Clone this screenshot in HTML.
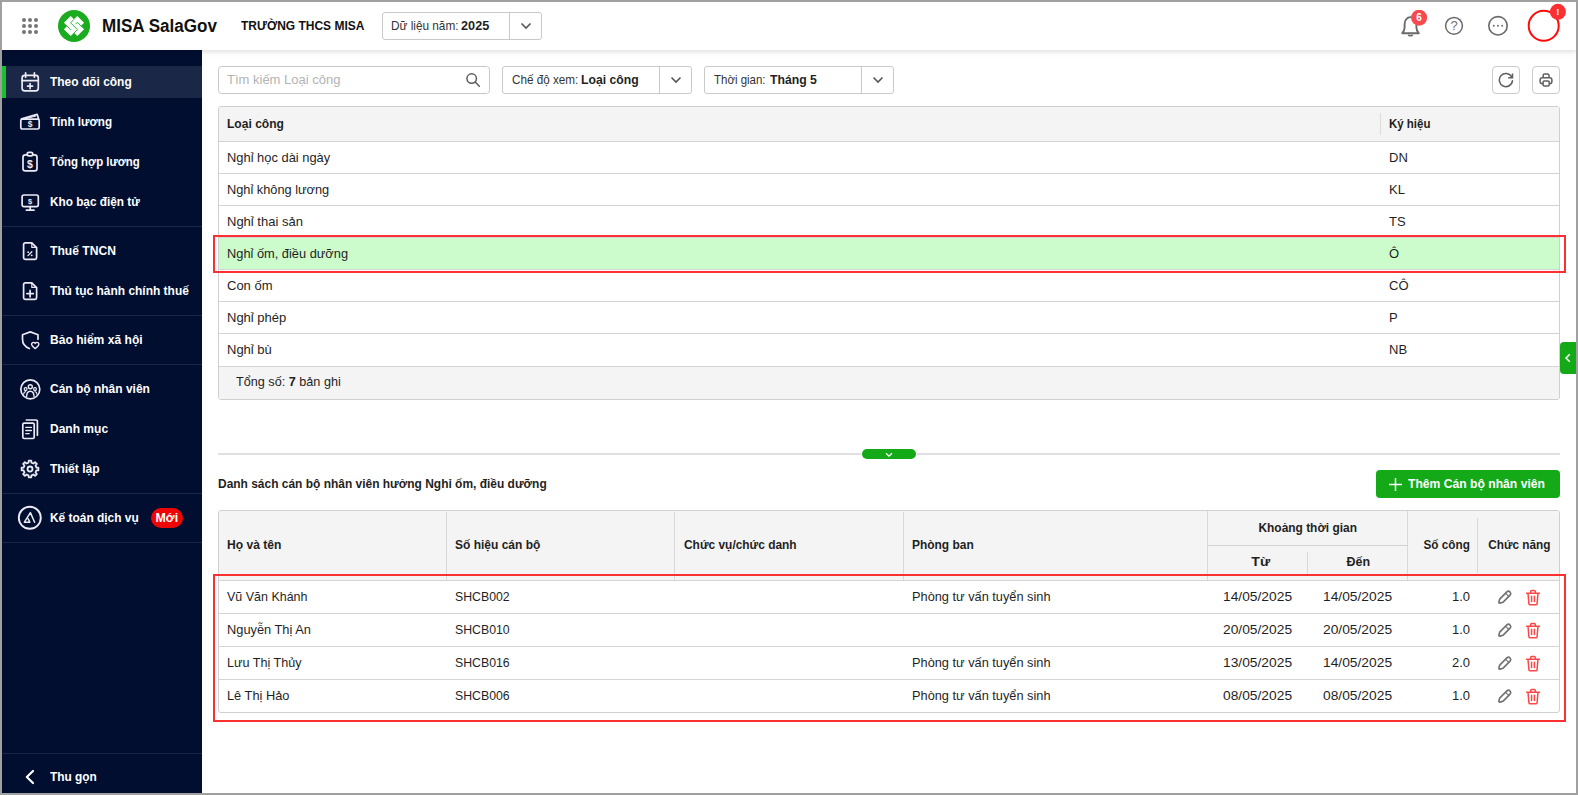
<!DOCTYPE html>
<html lang="vi">
<head>
<meta charset="utf-8">
<title>MISA SalaGov</title>
<style>
*{box-sizing:border-box;margin:0;padding:0}
html,body{width:1578px;height:795px;overflow:hidden;background:#a0a0a0;font-family:"Liberation Sans",sans-serif;font-size:13px;color:#1f1f1f}
#app{position:absolute;left:2px;top:2px;width:1574px;height:791px;background:#fff;overflow:hidden}
.abs{position:absolute}
/* header */
#hdr{position:absolute;left:0;top:0;width:1574px;height:48px;background:#fff;box-shadow:0 2px 5px rgba(0,0,0,.13);z-index:5}
#brand{position:absolute;left:100px;top:12px;font-size:18px;font-weight:700;color:#111;line-height:24px;white-space:nowrap}
#org{position:absolute;left:239px;top:14px;font-size:13px;font-weight:700;color:#111;line-height:20px;white-space:nowrap}
.combo{position:absolute;height:28px;border:1px solid #c9c9c9;border-radius:3px;background:#fff;line-height:26px;font-size:13px;white-space:nowrap;color:#333}
.combo b{color:#1f1f1f}
.combo .lbl{position:absolute;left:8px;top:0}
.combo .arr{position:absolute;right:0;top:0;width:32px;height:26px;border-left:1px solid #c9c9c9}
.combo .arr svg{position:absolute;left:10px;top:9px}
/* sidebar */
#side{position:absolute;left:0;top:48px;width:200px;height:743px;background:#010e30}
.mi{position:absolute;left:0;width:200px;height:32px;color:#fff;font-weight:700;font-size:13px;line-height:32px;white-space:nowrap}
.mi>span{position:absolute;left:48px;top:0}
.mi.act{background:#1a2746}
.mi.act:before{content:"";position:absolute;left:0;top:0;width:4px;height:32px;background:#19c12f}
.mi svg{position:absolute}
.new{position:absolute;left:149px;top:6px;width:32px;height:20px;border-radius:10px;background:#ee0505;color:#fff;font-style:normal;font-weight:700;font-size:13px;line-height:20px;text-align:center}
.sep{position:absolute;left:0;width:200px;height:1px;background:#1a2646}
/* content */
.grid{position:absolute;left:216px;width:1342px;border:1px solid #d0d0d0;border-radius:3px;overflow:hidden;background:#fff}
.row{position:absolute;left:0;width:1340px;border-top:1px solid #d4d4d4;white-space:nowrap}
.cell{position:absolute;top:0;white-space:nowrap}
.hb{font-weight:700}

.sbox{border:1px solid #c6c6c6;border-radius:3.5px;background:#fff}
.sbox .ph{position:absolute;left:8px;top:0;line-height:26px;color:#b3b3b3;white-space:nowrap}
.ibtn{width:28px;height:28px;border:1px solid #cbcbcb;border-radius:4px;background:#fff}
.ghead{position:absolute;left:0;width:1340px;background:#f4f4f4}
.row.sel{background:#ccfccc}
.gfoot{background:#f4f4f4}
.gfoot em{font-style:normal;font-weight:700}
.vs{position:absolute;width:1px;background:#d8d8d8}
.hs{position:absolute;height:1px;background:#d2d2d2}
.ctr{text-align:center}
.redbox{border:2px solid #fb3030;pointer-events:none}
#addbtn{background:#13a917;border-radius:4px;color:#fff;font-weight:700;line-height:28px;white-space:nowrap}
#addbtn>span{position:absolute;left:32px;top:0}
.t{display:inline-block;transform-origin:0 50%;white-space:nowrap}
.ctr .t,.new .t{transform-origin:50% 50%}
.cb{position:absolute;top:0}
</style>
</head>
<body>
<div id="app">
<div id="hdr">
  <svg class="abs" style="left:18px;top:14px" width="20" height="20" viewBox="0 0 20 20" fill="#757575"><circle cx="4" cy="4" r="2"/><circle cx="10" cy="4" r="2"/><circle cx="16" cy="4" r="2"/><circle cx="4" cy="10" r="2"/><circle cx="10" cy="10" r="2"/><circle cx="16" cy="10" r="2"/><circle cx="4" cy="16" r="2"/><circle cx="10" cy="16" r="2"/><circle cx="16" cy="16" r="2"/></svg>
  <svg class="abs" style="left:56px;top:8px" width="32" height="32" viewBox="0 0 32 32"><circle cx="16" cy="16" r="16" fill="#1aab1f"/><g transform="rotate(45 16 16)" fill="#fff"><path d="M11.2 6.5h9.6v4.7h4.7v9.6h-4.7v4.7h-9.6v-4.7H6.5v-9.6h4.7z"/></g><g stroke="#1aab1f" stroke-width=".9" fill="none"><path d="M16 9.4L12.6 12.8 19.4 19.6 16 22.9"/><path d="M8.9 16l3.7 3.7.8-.8"/><path d="M23.1 16l-3.7-3.7-1.9 1.9"/></g></svg>
  <div id="brand"><span class="t" style="transform:scaleX(0.947)">MISA SalaGov</span></div>
  <div id="org"><span class="t" style="transform:scaleX(0.922)">TRƯỜNG THCS MISA</span></div>
  <div class="combo" style="left:380px;top:10px;width:160px"><span class="lbl" style="left:7.5px"><span class="t" style="transform:scaleX(0.907)">Dữ liệu năm:</span></span><b class="t cb" style="left:78.1px;transform:scaleX(0.977)">2025</b><span class="arr"><svg width="12" height="8" viewBox="0 0 12 8" fill="none" stroke="#555" stroke-width="1.6"><path d="M1.5 1.5l4.5 4.5 4.5-4.5"/></svg></span></div>

  <svg class="abs" style="left:1394px;top:8px" width="40" height="32" viewBox="0 0 40 32"><g fill="none" stroke="#6a6a6a" stroke-width="1.9" stroke-linecap="round" stroke-linejoin="round"><path d="M6.2 23.2h16.6c-1.6-1.5-2.4-3.2-2.4-5.6v-3.3c0-3.9-2.4-7.2-5.9-7.2s-5.9 3.300-5.900 7.200v3.300c0 2.400-.8 4.100-2.400 5.600z"/><path d="M12.600 25.200q1.900.900 3.800 0" stroke-width="1.500"/></g><circle cx="23.100" cy="7.700" r="8" fill="#f74a4f"/><text x="23.100" y="11.300" font-size="10" font-weight="700" fill="#fff" text-anchor="middle" font-family="Liberation Sans, sans-serif">6</text></svg>
  <svg class="abs" style="left:1441px;top:13px" width="22" height="22" viewBox="0 0 22 22"><circle cx="11" cy="10.800" r="8.400" fill="none" stroke="#696969" stroke-width="1.500"/><text x="11" y="15.300" font-size="13" fill="#6f6f6f" text-anchor="middle" font-family="Liberation Sans, sans-serif">?</text></svg>
  <svg class="abs" style="left:1484px;top:12px" width="24" height="24" viewBox="0 0 24 24"><circle cx="12" cy="11.800" r="9.200" fill="none" stroke="#696969" stroke-width="1.600"/><circle cx="7.800" cy="11.800" r="1" fill="#6f6f6f"/><circle cx="12" cy="11.800" r="1" fill="#6f6f6f"/><circle cx="16.200" cy="11.800" r="1" fill="#6f6f6f"/></svg>
  <svg class="abs" style="left:1524px;top:0px" width="46" height="46" viewBox="0 0 46 46"><circle cx="17.700" cy="23.800" r="15" fill="#fff" stroke="#ff0a0a" stroke-width="2"/><circle cx="31.900" cy="9.800" r="8" fill="#fc2f33"/><text x="31.900" y="13.200" font-size="9.500" font-weight="700" fill="#fff" text-anchor="middle" font-family="Liberation Sans, sans-serif">!</text></svg>
</div>
<div id="side">
  <div class="mi act" style="top:16px"><svg style="left:16px;top:4px" width="24" height="24" viewBox="0 0 24 24"><g fill="none" stroke="#eceaf4" stroke-width="1.700" stroke-linecap="round" stroke-linejoin="round"><rect x="4.1" y="5.4" width="16.2" height="15.4" rx="2.6"/><path d="M7.6 2.8v4.4M16.4 2.8v4.4M4.1 10.6h16.2M12.1 13.6v5M9.6 16.1h5"/></g></svg><span><span class="t" style="transform:scaleX(0.920)">Theo dõi công</span></span></div>
  <div class="mi" style="top:56px"><svg style="left:16px;top:4px" width="24" height="24" viewBox="0 0 24 24"><g fill="none" stroke="#eceaf4" stroke-width="1.700" stroke-linecap="round" stroke-linejoin="round"><rect x="2.8" y="9.2" width="18.4" height="9.8" rx="1.6"/><path d="M3.6 8.9L19.2 4.4l1.4 4.5"/><path d="M7 8.800l10.800-2.600" stroke-width="1"/></g><text x="12" y="17.3" font-size="8.5" font-family="Liberation Sans, sans-serif" font-weight="700" fill="#eceaf4" stroke="none" text-anchor="middle">$</text></svg><span><span class="t" style="transform:scaleX(0.896)">Tính lương</span></span></div>
  <div class="mi" style="top:96px"><svg style="left:16px;top:4px" width="24" height="24" viewBox="0 0 24 24"><g fill="none" stroke="#eceaf4" stroke-width="1.700" stroke-linecap="round" stroke-linejoin="round"><rect x="5" y="4.8" width="14" height="16" rx="2.4"/><rect x="9.2" y="2.4" width="5.6" height="3.4" rx="1.7" fill="#010e30"/></g><text x="12" y="17.6" font-size="10.5" font-family="Liberation Sans, sans-serif" font-weight="700" fill="#eceaf4" stroke="none" text-anchor="middle">$</text></svg><span><span class="t" style="transform:scaleX(0.878)">Tổng hợp lương</span></span></div>
  <div class="mi" style="top:136px"><svg style="left:16px;top:4px" width="24" height="24" viewBox="0 0 24 24"><g fill="none" stroke="#eceaf4" stroke-width="1.700" stroke-linecap="round" stroke-linejoin="round"><rect x="4.1" y="5" width="16.2" height="11.6" rx="1.8"/><path d="M12.2 16.6v3.4M8.4 20.2h7.6"/></g><text x="12.2" y="13.7" font-size="7.5" font-family="Liberation Sans, sans-serif" font-weight="700" fill="#eceaf4" stroke="none" text-anchor="middle">$</text></svg><span><span class="t" style="transform:scaleX(0.906)">Kho bạc điện tử</span></span></div>
  <div class="mi" style="top:185px"><svg style="left:16px;top:4px" width="24" height="24" viewBox="0 0 24 24"><g fill="none" stroke="#eceaf4" stroke-width="1.700" stroke-linecap="round" stroke-linejoin="round"><path d="M7.2 3.8h6.6l4.8 4.8v10.200a1.6 1.6 0 0 1-1.6 1.6H7.2a1.6 1.6 0 0 1-1.6-1.6V5.4a1.6 1.6 0 0 1 1.6-1.6z"/><path d="M13.8 4.2v4.200h4.4" stroke-width="1.2"/><path d="M10 16.600l3.800-3.800" stroke-width="1.300"/></g><circle cx="10.200" cy="13.200" r=".9" fill="#eceaf4"/><circle cx="13.700" cy="16.300" r=".9" fill="#eceaf4"/></svg><span><span class="t" style="transform:scaleX(0.932)">Thuế TNCN</span></span></div>
  <div class="mi" style="top:225px"><svg style="left:16px;top:4px" width="24" height="24" viewBox="0 0 24 24"><g fill="none" stroke="#eceaf4" stroke-width="1.700" stroke-linecap="round" stroke-linejoin="round"><path d="M7.2 3.8h6.6l4.8 4.8v10.200a1.6 1.6 0 0 1-1.6 1.6H7.2a1.6 1.6 0 0 1-1.6-1.6V5.4a1.6 1.6 0 0 1 1.6-1.6z"/><path d="M13.8 4.2v4.200h4.4" stroke-width="1.2"/><path d="M12.100 11.400v6.400M8.900 14.600h6.400"/></g></svg><span><span class="t" style="transform:scaleX(0.920)">Thủ tục hành chính thuế</span></span></div>
  <div class="mi" style="top:274px"><svg style="left:16px;top:4px" width="24" height="24" viewBox="0 0 24 24"><g fill="none" stroke="#eceaf4" stroke-width="1.700" stroke-linecap="round" stroke-linejoin="round"><path d="M20 11.200V6.700L12.300 3.900 4.500 6.700v4.600c0 4.600 2.800 7.700 6.900 9.200"/><path d="M17.200 20.600c-2-1.500-3.600-2.700-3.600-4.300 0-1.200.9-1.900 1.800-1.900.8 0 1.400.400 1.800 1.100.4-.7 1-1.100 1.800-1.100.9 0 1.800.7 1.800 1.900 0 1.600-1.600 2.800-3.600 4.300z" stroke-width="1.400"/></g></svg><span><span class="t" style="transform:scaleX(0.929)">Bảo hiểm xã hội</span></span></div>
  <div class="mi" style="top:323px"><svg style="left:16px;top:4px" width="24" height="24" viewBox="0 0 24 24"><g fill="none" stroke="#eceaf4" stroke-width="1.700" stroke-linecap="round" stroke-linejoin="round"><circle cx="12.300" cy="12.300" r="9.500"/><circle cx="12.300" cy="9.800" r="2" stroke-width="1.400"/><path d="M8.600 19.600c0-3.300 1.500-5.400 3.700-5.400s3.700 2.100 3.700 5.400" stroke-width="1.400"/><rect x="6.300" y="10.600" width="2.600" height="2.800" rx="1" stroke-width="1.200"/><rect x="15.700" y="10.600" width="2.600" height="2.800" rx="1" stroke-width="1.200"/><path d="M5.600 17.200c.2-1.600.9-2.500 2-2.600M19 17.200c-.2-1.600-.9-2.500-2-2.600" stroke-width="1.200"/></g></svg><span><span class="t" style="transform:scaleX(0.922)">Cán bộ nhân viên</span></span></div>
  <div class="mi" style="top:363px"><svg style="left:16px;top:4px" width="24" height="24" viewBox="0 0 24 24"><g fill="none" stroke="#eceaf4" stroke-width="1.700" stroke-linecap="round" stroke-linejoin="round"><rect x="4.800" y="6.200" width="11.400" height="15.300" rx="1.400"/><path d="M8.400 3h9.600a1.400 1.400 0 0 1 1.400 1.400v13.800"/><path d="M7.800 10.400h5.600M7.800 13.500h5.600M7.800 16.600h3.400" stroke-width="1.400"/></g></svg><span><span class="t" style="transform:scaleX(0.924)">Danh mục</span></span></div>
  <div class="mi" style="top:403px"><svg style="left:16px;top:4px" width="24" height="24" viewBox="0 0 24 24"><g fill="none" stroke="#eceaf4" stroke-width="1.700" stroke-linecap="round" stroke-linejoin="round"><path d="M10.53 5.67 L10.74 3.59 L13.26 3.59 L13.47 5.67 L15.44 6.48 L17.05 5.16 L18.84 6.95 L17.52 8.56 L18.33 10.53 L20.41 10.74 L20.41 13.26 L18.33 13.47 L17.52 15.44 L18.84 17.05 L17.05 18.84 L15.44 17.52 L13.47 18.33 L13.26 20.41 L10.74 20.41 L10.53 18.33 L8.56 17.52 L6.95 18.84 L5.16 17.05 L6.48 15.44 L5.67 13.47 L3.59 13.26 L3.59 10.74 L5.67 10.53 L6.48 8.56 L5.16 6.95 L6.95 5.16 L8.56 6.48Z" stroke-width="1.800"/><circle cx="12" cy="12" r="2.500" stroke-width="1.800"/></g></svg><span><span class="t" style="transform:scaleX(0.928)">Thiết lập</span></span></div>
  <div class="mi" style="top:452px"><svg style="left:14px;top:2px" width="28" height="28" viewBox="0 0 28 28"><g fill="none" stroke="#eceaf4" stroke-width="1.700" stroke-linecap="round" stroke-linejoin="round"><circle cx="13.800" cy="13.800" r="11" stroke-width="1.900"/><path d="M8.400 18.200l6-9.600 4.200 9.600M8.400 18.200h5.400l-1.600-3.300" stroke-width="1.500"/></g></svg><span><span class="t" style="transform:scaleX(0.917)">Kế toán dịch vụ</span></span><i class="new"><span class="t" style="transform:scaleX(0.955)">Mới</span></i></div>
  <div class="sep" style="top:176px"></div>
  <div class="sep" style="top:265px"></div>
  <div class="sep" style="top:314px"></div>
  <div class="sep" style="top:443px"></div>
  <div class="sep" style="top:492px"></div>
  <div class="sep" style="top:703px"></div>
  <div class="mi" style="top:711px"><svg style="left:20px;top:8px" width="16" height="16" viewBox="0 0 16 16"><path d="M11 2L4.800 8l6.200 6" fill="none" stroke="#fff" stroke-width="2.200" stroke-linecap="round" stroke-linejoin="round"/></svg><span><span class="t" style="transform:scaleX(0.912)">Thu gọn</span></span></div>
</div>
<div id="main">
<div class="abs sbox" style="left:216px;top:64px;width:272px;height:28px"><span class="ph">Tìm kiếm Loại công</span><svg class="abs" style="left:246px;top:5px" width="16" height="16" viewBox="0 0 16 16" fill="none" stroke="#5c5c5c" stroke-width="1.500" stroke-linecap="round"><circle cx="6.700" cy="6.600" r="4.750"/><path d="M10.200 10.100l4.100 4.200"/></svg></div>
<div class="combo" style="left:500px;top:64px;width:190px"><span class="lbl" style="left:8.7px"><span class="t" style="transform:scaleX(0.899)">Chế độ xem:</span></span><b class="t cb" style="left:77.7px;transform:scaleX(0.938)">Loại công</b><span class="arr"><svg width="12" height="8" viewBox="0 0 12 8" fill="none" stroke="#555" stroke-width="1.6"><path d="M1.5 1.5l4.5 4.5 4.5-4.500"/></svg></span></div>
<div class="combo" style="left:702px;top:64px;width:190px"><span class="lbl" style="left:8.7px"><span class="t" style="transform:scaleX(0.883)">Thời gian:</span></span><b class="t cb" style="left:65px;transform:scaleX(0.941)">Tháng 5</b><span class="arr"><svg width="12" height="8" viewBox="0 0 12 8" fill="none" stroke="#555" stroke-width="1.6"><path d="M1.5 1.5l4.5 4.5 4.5-4.500"/></svg></span></div>
<div class="abs ibtn" style="left:1490px;top:64px"><svg class="abs" style="left:5px;top:5px" width="16" height="16" viewBox="0 0 16 16" fill="none" stroke="#5f5f5f" stroke-width="1.500" stroke-linecap="round" stroke-linejoin="round"><path d="M14.500 8.700A6.600 6.600 0 1 1 13.700 4.800"/><path d="M14.500 1.600v4.100h-4.300" stroke-linejoin="miter" stroke-linecap="butt"/></svg></div>
<div class="abs ibtn" style="left:1530px;top:64px"><svg class="abs" style="left:5px;top:5px" width="16" height="16" viewBox="0 0 16 16" fill="none" stroke="#5f5f5f" stroke-width="1.500" stroke-linejoin="round"><path d="M5.200 5.600V3.300a1.200 1.200 0 0 1 1.200-1.200h3.400a1.200 1.200 0 0 1 1.200 1.200v2.300"/><rect x="2.100" y="5.700" width="11.800" height="6" rx="2.200"/><rect x="5.100" y="9" width="6.100" height="4.900" rx="1.100" fill="#fff"/></svg></div>
<div class="grid" style="top:104px;height:294px">
<div class="ghead" style="top:0;height:34px"><span class="cell hb" style="left:8px;line-height:34px"><span class="t" style="transform:scaleX(0.928)">Loại công</span></span><span class="cell hb" style="left:1170px;line-height:34px"><span class="t" style="transform:scaleX(0.883)">Ký hiệu</span></span><i class="vs" style="left:1161px;top:6px;height:22px;background:#dcdcdc"></i></div>
<div class="row" style="top:34px;height:32px"><span class="cell" style="left:8px;line-height:31px"><span class="t" style="transform:scaleX(0.992)">Nghỉ học dài ngày</span></span><span class="cell" style="left:1170px;line-height:31px">DN</span></div>
<div class="row" style="top:66px;height:32px"><span class="cell" style="left:8px;line-height:31px"><span class="t" style="transform:scaleX(0.983)">Nghỉ không lương</span></span><span class="cell" style="left:1170px;line-height:31px">KL</span></div>
<div class="row" style="top:98px;height:32px"><span class="cell" style="left:8px;line-height:31px">Nghỉ thai sản</span><span class="cell" style="left:1170px;line-height:31px">TS</span></div>
<div class="row sel" style="top:130px;height:32px"><span class="cell" style="left:8px;line-height:31px"><span class="t" style="transform:scaleX(0.986)">Nghỉ ốm, điều dưỡng</span></span><span class="cell" style="left:1170px;line-height:31px">Ô</span></div>
<div class="row" style="top:162px;height:32px"><span class="cell" style="left:8px;line-height:31px">Con ốm</span><span class="cell" style="left:1170px;line-height:31px">CÔ</span></div>
<div class="row" style="top:194px;height:32px"><span class="cell" style="left:8px;line-height:31px">Nghỉ phép</span><span class="cell" style="left:1170px;line-height:31px">P</span></div>
<div class="row" style="top:226px;height:33px"><span class="cell" style="left:8px;line-height:31px">Nghỉ bù</span><span class="cell" style="left:1170px;line-height:31px">NB</span></div>
<div class="row gfoot" style="top:259px;height:33px"><span class="cell t" style="left:17px;line-height:30px;transform:scaleX(0.973)">Tổng số: <em>7</em> bản ghi</span></div>
</div>
<div class="abs redbox" style="left:211px;top:233px;width:1353px;height:38px"></div>
<div class="abs" style="left:1558px;top:340px;width:16px;height:32px;background:#13a917;border-radius:4px 0 0 4px"><svg class="abs" style="left:4px;top:11px" width="8" height="10" viewBox="0 0 8 10" fill="none" stroke="#fff" stroke-width="1.500"><path d="M5.800 1.200L2 5l3.800 3.800"/></svg></div>
<div class="abs" style="left:216px;top:451px;width:1342px;height:2px;background:#e0e0e0"></div>
<div class="abs" style="left:860px;top:447px;width:54px;height:10px;border-radius:5px;background:#13a917;box-shadow:0 0 0 1px #fff"><svg class="abs" style="left:23px;top:2.500px" width="8" height="6" viewBox="0 0 8 6" fill="none" stroke="#fff" stroke-width="1.300"><path d="M1 1.200l3 3 3-3"/></svg></div>
<div class="abs hb" id="ttl" style="left:216px;top:472px;line-height:20px;white-space:nowrap"><span class="t" style="transform:scaleX(0.920)">Danh sách cán bộ nhân viên hưởng Nghỉ ốm, điều dưỡng</span></div>
<div class="abs" id="addbtn" style="left:1374px;top:468px;width:184px;height:28px"><svg class="abs" style="left:13.300px;top:7.500px" width="13" height="13" viewBox="0 0 13 13" stroke="#fff" stroke-width="1.500"><path d="M6.500 0v13M0 6.500h13"/></svg><span><span class="t" style="transform:scaleX(0.934)">Thêm Cán bộ nhân viên</span></span></div>
<div class="grid" style="top:508px;height:203px">
<div class="ghead" style="top:0;height:69px"><span class="cell hb" style="left:8px;top:24px;line-height:20px"><span class="t" style="transform:scaleX(0.931)">Họ và tên</span></span><span class="cell hb" style="left:236px;top:24px;line-height:20px"><span class="t" style="transform:scaleX(0.923)">Số hiệu cán bộ</span></span><span class="cell hb" style="left:465px;top:24px;line-height:20px"><span class="t" style="transform:scaleX(0.917)">Chức vụ/chức danh</span></span><span class="cell hb" style="left:693px;top:24px;line-height:20px"><span class="t" style="transform:scaleX(0.919)">Phòng ban</span></span><span class="cell hb ctr" style="left:989px;width:200px;top:7px;line-height:20px"><span class="t" style="transform:scaleX(0.917)">Khoảng thời gian</span></span><span class="cell hb ctr" style="left:991.8px;width:100px;top:41px;line-height:20px"><span class="t" style="transform:scaleX(1.078)">Từ</span></span><span class="cell hb ctr" style="left:1089px;width:100px;top:41px;line-height:20px"><span class="t" style="transform:scaleX(0.956)">Đến</span></span><span class="cell hb ctr" style="left:1192.4px;width:70px;top:24px;line-height:20px"><span class="t" style="transform:scaleX(0.904)">Số công</span></span><span class="cell hb ctr" style="left:1259.8px;width:81px;top:24px;line-height:20px"><span class="t" style="transform:scaleX(0.906)">Chức năng</span></span><i class="vs" style="left:227px;top:1px;height:68px"></i><i class="vs" style="left:455px;top:1px;height:68px"></i><i class="vs" style="left:684px;top:1px;height:68px"></i><i class="vs" style="left:988px;top:0px;height:69px"></i><i class="vs" style="left:1188px;top:0px;height:69px"></i><i class="vs" style="left:1088px;top:41px;height:22px"></i><i class="vs" style="left:1258px;top:7px;height:55px"></i><i class="hs" style="left:989px;top:34px;width:199px"></i></div>
<div class="row" style="top:69px;height:33px"><span class="cell" style="left:8px;line-height:32px"><span class="t" style="transform:scaleX(0.960)">Vũ Văn Khánh</span></span><span class="cell" style="left:236px;line-height:32px"><span class="t" style="transform:scaleX(0.945)">SHCB002</span></span><span class="cell" style="left:693px;line-height:32px"><span class="t" style="transform:scaleX(0.983)">Phòng tư vấn tuyển sinh</span></span><span class="cell ctr" style="left:989px;width:100px;line-height:32px"><span class="t" style="transform:scaleX(1.061)">14/05/2025</span></span><span class="cell ctr" style="left:1089px;width:100px;line-height:32px"><span class="t" style="transform:scaleX(1.061)">14/05/2025</span></span><span class="cell" style="left:1189px;width:62px;text-align:right;line-height:32px">1.0</span><svg class="abs" style="left:1278px;top:8px" width="16" height="16" viewBox="0 0 16 16" fill="none" stroke="#717171" stroke-width="1.650" stroke-linejoin="round"><path d="M2.700 10.100L10.100 2.700A2.300 2.300 0 0 1 13.300 5.900L5.900 13.300 3 14.100Q1.700 14.300 1.900 13z"/><path d="M8.700 4.300l3.100 3.100" stroke-width="1.200"/></svg><svg class="abs" style="left:1306px;top:8px" width="16" height="17" viewBox="0 0 16 17" fill="none" stroke="#fd4646" stroke-width="1.500" stroke-linejoin="round" stroke-linecap="round"><path d="M1.600 4.200h12.800M3 4.200l.9 10.400a1.300 1.300 0 0 0 1.300 1.200h5.600a1.300 1.300 0 0 0 1.300-1.200L13 4.200M5.600 4V2.600a1.200 1.200 0 0 1 1.200-1.200h2.400a1.200 1.200 0 0 1 1.200 1.200V4M6.600 7.200v5.400M9.400 7.200v5.400"/></svg></div>
<div class="row" style="top:102px;height:33px"><span class="cell" style="left:8px;line-height:32px"><span class="t" style="transform:scaleX(0.986)">Nguyễn Thị An</span></span><span class="cell" style="left:236px;line-height:32px"><span class="t" style="transform:scaleX(0.945)">SHCB010</span></span><span class="cell ctr" style="left:989px;width:100px;line-height:32px"><span class="t" style="transform:scaleX(1.061)">20/05/2025</span></span><span class="cell ctr" style="left:1089px;width:100px;line-height:32px"><span class="t" style="transform:scaleX(1.061)">20/05/2025</span></span><span class="cell" style="left:1189px;width:62px;text-align:right;line-height:32px">1.0</span><svg class="abs" style="left:1278px;top:8px" width="16" height="16" viewBox="0 0 16 16" fill="none" stroke="#717171" stroke-width="1.650" stroke-linejoin="round"><path d="M2.700 10.100L10.100 2.700A2.300 2.300 0 0 1 13.300 5.900L5.900 13.300 3 14.100Q1.700 14.300 1.900 13z"/><path d="M8.700 4.300l3.100 3.100" stroke-width="1.200"/></svg><svg class="abs" style="left:1306px;top:8px" width="16" height="17" viewBox="0 0 16 17" fill="none" stroke="#fd4646" stroke-width="1.500" stroke-linejoin="round" stroke-linecap="round"><path d="M1.600 4.200h12.800M3 4.200l.9 10.400a1.300 1.300 0 0 0 1.300 1.200h5.600a1.300 1.300 0 0 0 1.300-1.200L13 4.200M5.600 4V2.600a1.200 1.200 0 0 1 1.200-1.200h2.400a1.200 1.200 0 0 1 1.200 1.200V4M6.600 7.200v5.400M9.400 7.200v5.400"/></svg></div>
<div class="row" style="top:135px;height:33px"><span class="cell" style="left:8px;line-height:32px"><span class="t" style="transform:scaleX(0.970)">Lưu Thị Thủy</span></span><span class="cell" style="left:236px;line-height:32px"><span class="t" style="transform:scaleX(0.945)">SHCB016</span></span><span class="cell" style="left:693px;line-height:32px"><span class="t" style="transform:scaleX(0.983)">Phòng tư vấn tuyển sinh</span></span><span class="cell ctr" style="left:989px;width:100px;line-height:32px"><span class="t" style="transform:scaleX(1.061)">13/05/2025</span></span><span class="cell ctr" style="left:1089px;width:100px;line-height:32px"><span class="t" style="transform:scaleX(1.061)">14/05/2025</span></span><span class="cell" style="left:1189px;width:62px;text-align:right;line-height:32px">2.0</span><svg class="abs" style="left:1278px;top:8px" width="16" height="16" viewBox="0 0 16 16" fill="none" stroke="#717171" stroke-width="1.650" stroke-linejoin="round"><path d="M2.700 10.100L10.100 2.700A2.300 2.300 0 0 1 13.300 5.900L5.900 13.300 3 14.100Q1.700 14.300 1.900 13z"/><path d="M8.700 4.300l3.100 3.100" stroke-width="1.200"/></svg><svg class="abs" style="left:1306px;top:8px" width="16" height="17" viewBox="0 0 16 17" fill="none" stroke="#fd4646" stroke-width="1.500" stroke-linejoin="round" stroke-linecap="round"><path d="M1.600 4.200h12.800M3 4.200l.9 10.400a1.300 1.300 0 0 0 1.300 1.200h5.600a1.300 1.300 0 0 0 1.300-1.200L13 4.200M5.600 4V2.600a1.200 1.200 0 0 1 1.200-1.200h2.400a1.200 1.200 0 0 1 1.200 1.200V4M6.600 7.200v5.400M9.400 7.200v5.400"/></svg></div>
<div class="row" style="top:168px;height:33px"><span class="cell" style="left:8px;line-height:32px"><span class="t" style="transform:scaleX(0.985)">Lê Thị Hảo</span></span><span class="cell" style="left:236px;line-height:32px"><span class="t" style="transform:scaleX(0.945)">SHCB006</span></span><span class="cell" style="left:693px;line-height:32px"><span class="t" style="transform:scaleX(0.983)">Phòng tư vấn tuyển sinh</span></span><span class="cell ctr" style="left:989px;width:100px;line-height:32px"><span class="t" style="transform:scaleX(1.061)">08/05/2025</span></span><span class="cell ctr" style="left:1089px;width:100px;line-height:32px"><span class="t" style="transform:scaleX(1.061)">08/05/2025</span></span><span class="cell" style="left:1189px;width:62px;text-align:right;line-height:32px">1.0</span><svg class="abs" style="left:1278px;top:8px" width="16" height="16" viewBox="0 0 16 16" fill="none" stroke="#717171" stroke-width="1.650" stroke-linejoin="round"><path d="M2.700 10.100L10.100 2.700A2.300 2.300 0 0 1 13.300 5.900L5.900 13.300 3 14.100Q1.700 14.300 1.900 13z"/><path d="M8.700 4.300l3.100 3.100" stroke-width="1.200"/></svg><svg class="abs" style="left:1306px;top:8px" width="16" height="17" viewBox="0 0 16 17" fill="none" stroke="#fd4646" stroke-width="1.500" stroke-linejoin="round" stroke-linecap="round"><path d="M1.600 4.200h12.800M3 4.200l.9 10.400a1.300 1.300 0 0 0 1.300 1.200h5.600a1.300 1.300 0 0 0 1.300-1.200L13 4.200M5.600 4V2.600a1.200 1.200 0 0 1 1.200-1.200h2.400a1.200 1.200 0 0 1 1.200 1.200V4M6.600 7.200v5.400M9.400 7.200v5.400"/></svg></div>
</div>
<div class="abs redbox" style="left:211px;top:572px;width:1353px;height:148px"></div>
</div>
</div>
</body>
</html>
